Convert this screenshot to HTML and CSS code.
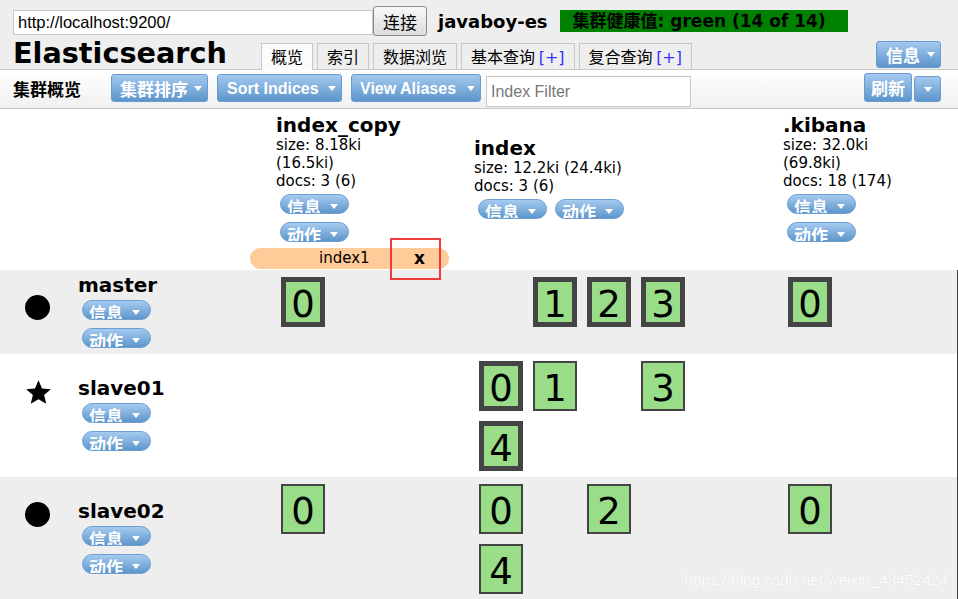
FILE: index.html
```html
<!DOCTYPE html>
<html>
<head>
<meta charset="utf-8">
<title>Elasticsearch Head</title>
<link rel="stylesheet" href="styles.css">
</head>
<body>
<div class="page">
  <header class="hdr">
    <div class="hdr-row1">
      <input class="url" type="text" value="http://localhost:9200/">
      <button class="connect">连接</button>
      <span class="cluster-name">javaboy-es</span>
      <span class="health">集群健康值: green (14 of 14)</span>
    </div>
    <div class="hdr-row2">
      <h1 class="logo">Elasticsearch</h1>
      <nav class="tabs">
        <span class="tab active">概览</span>
        <span class="tab">索引</span>
        <span class="tab">数据浏览</span>
        <span class="tab">基本查询 <b class="plus">[+]</b></span>
        <span class="tab">复合查询 <b class="plus">[+]</b></span>
      </nav>
      <button class="btn btn-info"><span>信息</span><i class="caret"></i></button>
    </div>
  </header>

  <div class="toolbar">
    <span class="tb-title">集群概览</span>
    <button class="btn tb-sort"><span>集群排序</span><i class="caret"></i></button>
    <button class="btn tb-indices"><span>Sort Indices</span><i class="caret"></i></button>
    <button class="btn tb-aliases"><span>View Aliases</span><i class="caret"></i></button>
    <input class="filter" type="text" placeholder="Index Filter">
    <div class="tb-right">
      <button class="btn tb-refresh"><span>刷新</span></button>
      <button class="btn tb-drop"><i class="caret"></i></button>
    </div>
  </div>

  <div class="cluster">
    <div class="idx-head">
      <div class="ih-cell"></div>
      <div class="ih-cell">
        <div class="ih narrow">
          <div class="ih-name">index_copy</div>
          <div class="ih-stat">size: 8.18ki (16.5ki)</div>
          <div class="ih-stat">docs: 3 (6)</div>
          <div class="pills">
            <span class="pill"><span>信息</span><i class="caret"></i></span>
            <span class="pill"><span>动作</span><i class="caret"></i></span>
          </div>
        </div>
      </div>
      <div class="ih-cell">
        <div class="ih">
          <div class="ih-name">index</div>
          <div class="ih-stat">size: 12.2ki (24.4ki)</div>
          <div class="ih-stat">docs: 3 (6)</div>
          <div class="pills">
            <span class="pill"><span>信息</span><i class="caret"></i></span>
            <span class="pill"><span>动作</span><i class="caret"></i></span>
          </div>
        </div>
      </div>
      <div class="ih-cell">
        <div class="ih narrow">
          <div class="ih-name">.kibana</div>
          <div class="ih-stat">size: 32.0ki (69.8ki)</div>
          <div class="ih-stat">docs: 18 (174)</div>
          <div class="pills">
            <span class="pill"><span>信息</span><i class="caret"></i></span>
            <span class="pill"><span>动作</span><i class="caret"></i></span>
          </div>
        </div>
      </div>
    </div>

    <div class="alias-row">
      <div class="alias"><span class="alias-name">index1</span><span class="alias-x">x</span></div>
      <div class="mark"></div>
    </div>

    <div class="node-row gray">
      <div class="node">
        <div class="node-icon"><svg width="25" height="25" viewBox="0 0 25 25"><circle cx="12.5" cy="12.5" r="12.5" fill="#000"/></svg></div>
        <div class="node-info">
          <div class="node-name">master</div>
          <span class="pill"><span>信息</span><i class="caret"></i></span>
          <span class="pill"><span>动作</span><i class="caret"></i></span>
        </div>
      </div>
      <div class="shards"><span class="sh p">0</span></div>
      <div class="shards four"><span class="sh e"></span><span class="sh p">1</span><span class="sh p">2</span><span class="sh p">3</span></div>
      <div class="shards"><span class="sh p">0</span></div>
    </div>

    <div class="node-row">
      <div class="node">
        <div class="node-icon"><svg width="27" height="27" viewBox="0 0 24 24"><path d="M12 1.2l3.1 7.3 7.9.6-6 5.2 1.9 7.7L12 17.9 5.1 22l1.9-7.7-6-5.2 7.9-.6z" fill="#000"/></svg></div>
        <div class="node-info">
          <div class="node-name">slave01</div>
          <span class="pill"><span>信息</span><i class="caret"></i></span>
          <span class="pill"><span>动作</span><i class="caret"></i></span>
        </div>
      </div>
      <div class="shards"></div>
      <div class="shards four"><span class="sh p">0</span><span class="sh">1</span><span class="sh e"></span><span class="sh">3</span><span class="sh p">4</span></div>
      <div class="shards"></div>
    </div>

    <div class="node-row gray">
      <div class="node">
        <div class="node-icon"><svg width="25" height="25" viewBox="0 0 25 25"><circle cx="12.5" cy="12.5" r="12.5" fill="#000"/></svg></div>
        <div class="node-info">
          <div class="node-name">slave02</div>
          <span class="pill"><span>信息</span><i class="caret"></i></span>
          <span class="pill"><span>动作</span><i class="caret"></i></span>
        </div>
      </div>
      <div class="shards"><span class="sh">0</span></div>
      <div class="shards four"><span class="sh">0</span><span class="sh e"></span><span class="sh">2</span><span class="sh e"></span><span class="sh">4</span></div>
      <div class="shards"><span class="sh">0</span></div>
    </div>
  </div>

  <div class="watermark">https://blog.csdn.net/weixin_43452424</div>
</div>
</body>
</html>
```

FILE: styles.css
```css
html, body {
  margin: 0;
  padding: 0;
  background: #fff;
}
body {
  font-family: "DejaVu Sans", "Noto Sans CJK SC", sans-serif;
  color: #000;
  overflow: hidden;
}
.page {
  position: relative;
  width: 958px;
  height: 599px;
  overflow: hidden;
}

/* ---------- header ---------- */
.hdr {
  background: #eeeeee;
  height: 69px;
  border-bottom: 1px solid #c8c8c8;
}
.hdr-row1 {
  display: flex;
  align-items: flex-start;
  height: 37px;
  padding-left: 13px;
}
.url {
  margin: 10px 0 0 0;
  width: 360px;
  height: 25px;
  box-sizing: border-box;
  border: 1px solid #c8c8c8;
  padding: 0 4px;
  font: 16.5px "Liberation Sans", sans-serif;
  color: #000;
  background: #fff;
  outline: none;
}
.connect {
  margin: 6px 0 0 0;
  width: 54px;
  height: 30px;
  box-sizing: border-box;
  border: 1px solid #8a8a8a;
  border-radius: 3px;
  background: linear-gradient(#f8f8f8, #dcdcdc);
  font: 17px "Noto Sans CJK SC", sans-serif;
  color: #000;
  padding: 0;
}
.cluster-name {
  margin: 12px 0 0 11px;
  font: bold 18px/20px "DejaVu Sans", sans-serif;
}
.health {
  margin: 10px 0 0 12px;
  width: 288px;
  height: 22px;
  box-sizing: border-box;
  padding-left: 13px;
  background: #008000;
  color: #000;
  font: bold 17px/22px "DejaVu Sans", "Noto Sans CJK SC", sans-serif;
  white-space: nowrap;
}
.hdr-row2 {
  display: flex;
  align-items: flex-end;
  height: 32px;
  padding: 0 17px 0 13px;
}
.logo {
  margin: 0;
  width: 248px;
  font: bold 28.7px/32px "DejaVu Sans", sans-serif;
}
.tabs {
  display: flex;
  gap: 4px;
}
.tab {
  height: 26px;
  box-sizing: border-box;
  border: 1px solid #c8c8c8;
  border-bottom: 0;
  padding: 0 9px;
  background: #eeeeee;
  font: 16px/25px "Noto Sans CJK SC", sans-serif;
  white-space: nowrap;
}
.tab.active {
  background: #fbfbfb;
  height: 27px;
  margin-bottom: -1px;
}
.plus {
  font: 16px "DejaVu Sans", sans-serif;
  color: #3333ff;
  font-weight: normal;
}

/* ---------- buttons ---------- */
.btn {
  display: inline-flex;
  align-items: center;
  box-sizing: border-box;
  border: 1px solid #6a9bd0;
  border-radius: 3px;
  background: linear-gradient(#a3c9ef, #5d95cb);
  color: #fff;
  font: bold 16px "Liberation Sans", "Noto Sans CJK SC", sans-serif;
  padding: 0 5px 0 8px;
  margin: 0;
  white-space: nowrap;
}
.btn .caret {
  margin-left: auto;
}
.caret {
  display: inline-block;
  width: 0;
  height: 0;
  border-left: 4.5px solid transparent;
  border-right: 4.5px solid transparent;
  border-top: 5px solid #fff;
}
.btn-info {
  margin: 0 0 1px auto;
  width: 65px;
  height: 27px;
  padding-left: 9px;
  padding-right: 5px;
  font-size: 17px;
}

/* ---------- toolbar ---------- */
.toolbar {
  display: flex;
  align-items: flex-start;
  height: 38px;
  padding-left: 13px;
  background: linear-gradient(#ffffff, #f0f0f0);
  border-bottom: 1px solid #c8c8c8;
}
.tb-title {
  width: 98px;
  font: bold 17px/38px "Noto Sans CJK SC", sans-serif;
}
.tb-sort, .tb-indices, .tb-aliases {
  margin-top: 4px;
  height: 28px;
  margin-right: 9px;
}
.tb-sort { width: 97px; font-size: 17px; }
.tb-indices { width: 125px; padding-left: 9px; padding-top: 2px; }
.tb-aliases { width: 130px; padding-left: 8px; padding-top: 2px; margin-right: 5px; }
.tb-indices .caret, .tb-aliases .caret { margin-top: -2px; }
.filter {
  margin-top: 6px;
  width: 205px;
  height: 31px;
  box-sizing: border-box;
  border: 1px solid #c8c8c8;
  padding: 0 4px;
  font: 16px "Liberation Sans", sans-serif;
  background: #fff;
  outline: none;
}
.filter::placeholder {
  color: #777;
}
.tb-right {
  margin-left: auto;
  margin-right: 17px;
  display: flex;
  align-items: flex-end;
  gap: 2px;
  height: 32px;
}
.tb-refresh {
  width: 48px;
  height: 29px;
  padding-left: 6px;
  font-size: 17px;
}
.tb-drop {
  width: 27px;
  height: 26px;
  padding: 0;
  justify-content: center;
}
.tb-drop .caret {
  margin: 0;
}

/* ---------- cluster view ---------- */
.cluster {
  display: flex;
  flex-direction: column;
}
.idx-head {
  display: grid;
  grid-template-columns: 271px 198px 309px 180px;
  height: 139px;
  box-sizing: border-box;
  padding-top: 3px;
  align-items: center;
}
.ih {
  padding-left: 5px;
}
.ih.narrow {
  width: 135px;
}
.ih-name {
  font: bold 20px/22px "DejaVu Sans", sans-serif;
}
.ih-stat {
  font: 15px/18px "DejaVu Sans", sans-serif;
}
.pills {
  display: flex;
  flex-wrap: wrap;
}
.pill {
  display: inline-flex;
  align-items: flex-start;
  width: 69px;
  height: 20px;
  box-sizing: border-box;
  margin: 4px;
  padding: 3px 0 0 6px;
  border: 1px solid #6d9fd3;
  border-radius: 10px;
  background: linear-gradient(#a6cbf0, #5d96cb);
  color: #fff;
  font: bold 17px/17px "Noto Sans CJK SC", sans-serif;
  overflow: hidden;
}
.pill .caret {
  margin: 6px 0 0 9px;
}

.alias-row {
  position: relative;
  height: 22px;
  padding-left: 250px;
}
.alias {
  display: flex;
  width: 199px;
  height: 21px;
  border-radius: 11px;
  background: #ffcc99;
  font: 15px/21px "DejaVu Sans", sans-serif;
}
.alias-name {
  width: 140px;
  box-sizing: border-box;
  padding-left: 69px;
}
.alias-x {
  padding-left: 24px;
  font: bold 17px/21px "DejaVu Sans", sans-serif;
}
.mark {
  position: absolute;
  left: 390px;
  top: -10px;
  width: 51px;
  height: 42px;
  box-sizing: border-box;
  border: 2px solid #f23a3a;
  z-index: 2;
}

.node-row {
  display: grid;
  grid-template-columns: 271px 198px 309px 180px;
  padding: 2px 0 1px;
  border-right: 1px solid #444;
  box-sizing: border-box;
  width: 958px;
}
.node-row.gray {
  background: #eeeeee;
}
.node {
  display: flex;
}
.node-icon {
  width: 27px;
  padding: 23px 0 0 25px;
}
.node-info {
  margin-left: 26px;
  min-height: 81px;
  display: flex;
  flex-direction: column;
  justify-content: center;
  align-items: flex-start;
}
.node-name {
  font: bold 20px/22px "DejaVu Sans", sans-serif;
}
.shards {
  display: flex;
  flex-wrap: wrap;
  align-content: flex-start;
  padding-left: 5px;
}
.shards.four {
  width: 216px;
}
.sh {
  width: 44px;
  height: 50px;
  margin: 5px;
  box-sizing: border-box;
  border: 2px solid #444;
  background: #99dd88;
  display: flex;
  align-items: center;
  justify-content: center;
  padding-top: 5px;
  font: 37px/1 "DejaVu Sans", sans-serif;
  color: #000;
}
.sh.p {
  border-width: 5px;
}
.sh.e {
  visibility: hidden;
}

.watermark {
  position: absolute;
  right: 10px;
  bottom: 10px;
  font: 15.5px "Liberation Sans", sans-serif;
  color: #fdfdfd;
  text-shadow: 0 0 1px rgba(0, 0, 0, 0.1);
  z-index: 3;
}
```
